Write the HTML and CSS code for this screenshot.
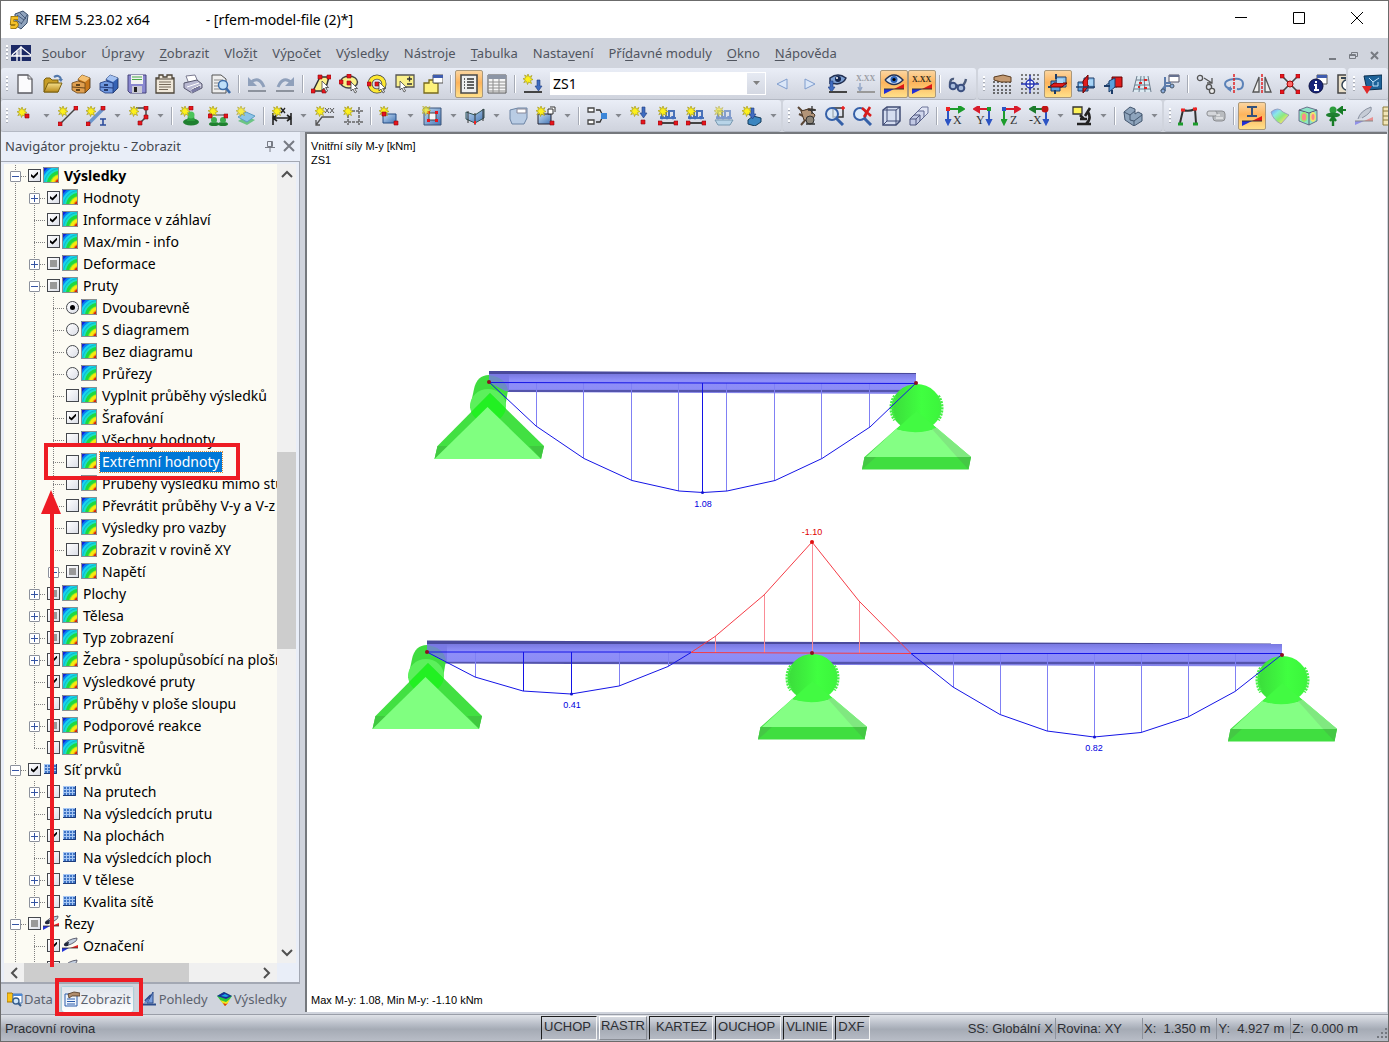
FILE: index.html
```html
<!DOCTYPE html>
<html lang="cs">
<head>
  <meta charset="UTF-8">
  <title>RFEM 5.23.02 x64 - [rfem-model-file (2)*]</title>
  <meta name="viewport" content="width=device-width, initial-scale=1.0">
  <link rel="stylesheet" href="styles.css">
</head>
<body>
  <!-- Icon sprite -->
  <svg class="sprite" aria-hidden="true">
    <defs>
      <linearGradient id="gBlue" x1="0" y1="0" x2="1" y2="1"><stop offset="0" stop-color="#c4dcf5"/><stop offset="1" stop-color="#4576b4"/></linearGradient>
      <linearGradient id="gGold" x1="0" y1="0" x2="0" y2="1"><stop offset="0" stop-color="#f6e08a"/><stop offset="1" stop-color="#b98a1a"/></linearGradient>
      <linearGradient id="gRain" x1="0" y1="0" x2="1" y2="1"><stop offset="0" stop-color="#7a8cff"/><stop offset=".3" stop-color="#8be8e8"/><stop offset=".55" stop-color="#8eea7c"/><stop offset=".8" stop-color="#f5e26c"/><stop offset="1" stop-color="#ff7a6a"/></linearGradient>
      <path id="star" d="M5 0 6.2 3 9 1.5 7.6 4.3 10 5.5 7.4 6.6 8.5 9.5 5.6 8 4.5 10.5 3.6 7.6.8 8.6 2.4 6 0 4.8 2.8 3.8 1.6 1 4.2 2.5z" fill="#fdf01c" stroke="#a89c20" stroke-width=".7"/>
      <path id="nd" d="M0 0h4v4H0z" fill="#e8141c" stroke="#8c0c10" stroke-width=".6"/>
      <path id="cur" d="M0 0v9l2-2 2 4 1.600-1-2-3.500h3z" fill="#fff" stroke="#444" stroke-width=".8"/>
      <path id="load" d="M0 0h3v6h2l-3.500 5L-2 6h2z" fill="#3f6cc0" stroke="#203c80" stroke-width=".6"/>
      <g id="diag"><path d="M0 20v-5l10 0z" fill="#2230d8"/><path d="M10 15 20 10v5z" fill="#e01818"/><path d="M0 15h20" stroke="#333"/></g>
      <g id="frame2"><path d="M2 10h16M4 10V3h4v6M11 9V3h5v6" fill="none" stroke="#4a72b8" stroke-width="2"/><path d="M2 8l2 4 2-4M7 8l2 4 2-4M13 8l2 4 2-4" fill="#3f6cc0"/></g>
    </defs>

    <symbol id="i-app" viewBox="0 0 20 20"><path d="M6 4 14 1l5 4-1 8-6 6-6-4z" fill="#8fa3bd" stroke="#3b4f6c"/><path d="M8 5l7 5M11 3l6 6M6 9l7 5M15 10l3-5M12 14l3-4" stroke="#33476a" stroke-width=".8"/><path d="M9 8H3.500L3 13h4q2 2-1 4H1.500" fill="none" stroke="#8c6a08" stroke-width="4"/><path d="M9 8H3.500L3 13h4q2 2-1 4H1.500" fill="none" stroke="#f5c128" stroke-width="2.400"/></symbol>
    <symbol id="i-bridge" viewBox="0 0 20 16"><path d="M0 0h20v16H0z" fill="#1c2a66"/><path d="M0 11h20M1 10l9-8 10 8M10 1v15M6 6v10" fill="none" stroke="#fff" stroke-width="1.300"/><path d="M10 2v9H3z" fill="#fff" opacity=".6"/></symbol>
    <symbol id="i-new" viewBox="0 0 20 20"><path d="M3 1h10l4 4v14H3z" fill="#fbfbfd" stroke="#5a5a60" stroke-width="1.300"/><path d="M13 1v4h4" fill="#ddd" stroke="#5a5a60"/></symbol>
    <symbol id="i-open" viewBox="0 0 20 20"><path d="M1 18V6l2-2h4l2 2h6v12z" fill="#c79d26" stroke="#7a6010"/><path d="M1 18 5 9h14l-4 9z" fill="url(#gGold)" stroke="#7a6010"/><path d="M11 3q5-3 7 2" fill="none" stroke="#5278ac" stroke-width="2.200"/><path d="M15 5h5l-2 3z" fill="#5278ac"/></symbol>
    <symbol id="i-cab" viewBox="0 0 20 20"><path d="M7 5l4-4 8 3v10l-5 5z" fill="#c9781a" stroke="#4a3010" stroke-width=".8"/><path d="M7 5l4-4 8 3-5 4z" fill="#f5c070"/><path d="M1 9l6-2 7 2v10l-8 0-5-3z" fill="#e0a050" stroke="#6a4618" stroke-width=".8"/><path d="M1 13l13 1" stroke="#6a4618"/><path d="M5 11h4M5 16h4" stroke="#3a2608" stroke-width="1.600"/></symbol>
    <symbol id="i-cabblue" viewBox="0 0 20 20"><path d="M7 5l4-4 8 3v10l-5 5z" fill="#3562b4" stroke="#182c5c" stroke-width=".8"/><path d="M7 5l4-4 8 3-5 4z" fill="#a4c2f2"/><path d="M1 9l6-2 7 2v10l-8 0-5-3z" fill="#6f98e0" stroke="#20387a" stroke-width=".8"/><path d="M1 13l13 1" stroke="#20387a"/><path d="M5 11h4M5 16h4" stroke="#101c44" stroke-width="1.600"/></symbol>
    <symbol id="i-save" viewBox="0 0 20 20"><path d="M1 1h18v18H3l-2-2z" fill="#8a88d0" stroke="#45437a"/><path d="M4 1h12v9H4z" fill="#f2f2f2"/><path d="M5 3h10M5 5.500h10" stroke="#48a848"/><path d="M5 12h10v7H5z" fill="#c9c9d4"/><path d="M7 13h3v5H7z" fill="#222"/></symbol>
    <symbol id="i-report" viewBox="0 0 20 20"><path d="M1 4h3V1h4v2h4V1h5v3h2v15H1z" fill="#f0e8da" stroke="#4c4438" stroke-width="1.300"/><path d="M4 8h12M4 10.500h12M4 13h12M4 15.500h9" stroke="#75695a"/><path d="M1 5h18" stroke="#4c4438"/></symbol>
    <symbol id="i-print" viewBox="0 0 20 20"><path d="M3 2l9-1 3 7-9 2z" fill="#fff" stroke="#7a7a90"/><path d="M1 9l13-3 5 4v4l-10 5-8-5z" fill="#b9b9d2" stroke="#55556c"/><path d="M4 13l12-4M9 19v-4l9-4" stroke="#fff"/><path d="M8 16l9-4v3l-8 4z" fill="#7b7ba4"/></symbol>
    <symbol id="i-preview" viewBox="0 0 20 20"><path d="M1 1h9l5 4v14H1z" fill="#eee" stroke="#555"/><path d="M3 6h9M3 9h9M3 12h9M3 15h8" stroke="#8a8a8a"/><circle cx="12" cy="11" r="4.500" fill="#bfe0fa" stroke="#3c6ca8" stroke-width="1.500"/><path d="M15 14l4 5" stroke="#3c6ca8" stroke-width="2.600"/></symbol>
    <symbol id="i-undo" viewBox="0 0 20 20"><path d="M3 9q9-8 14 4" fill="none" stroke="#8fa0bb" stroke-width="3"/><path d="M1 3v9h9z" fill="#8fa0bb"/><path d="M1 17h18" stroke="#8d939e" stroke-width="2"/></symbol>
    <symbol id="i-redo" viewBox="0 0 20 20"><path d="M17 9Q8 1 3 13" fill="none" stroke="#8fa0bb" stroke-width="3"/><path d="M19 3v9h-9z" fill="#8fa0bb"/><path d="M1 17h18" stroke="#8d939e" stroke-width="2"/></symbol>
    <symbol id="i-selpoly" viewBox="0 0 20 20"><path d="M2 17 9 3h9l-4 14z" fill="#faf08a" stroke="#333" stroke-width="1.500"/><use href="#nd" x="0" y="15"/><use href="#nd" x="7" y="1"/><use href="#nd" x="16" y="1"/><use href="#nd" x="11" y="15"/><use href="#cur" x="11" y="7"/></symbol>
    <symbol id="i-selell" viewBox="0 0 20 20"><ellipse cx="10" cy="8" rx="8.500" ry="6" fill="#faf08a" stroke="#444" stroke-width="1.500"/><use href="#nd" x="8" y="0"/><use href="#nd" x="0" y="6"/><use href="#nd" x="8" y="7"/><use href="#cur" x="12" y="8"/></symbol>
    <symbol id="i-selring" viewBox="0 0 20 20"><circle cx="10" cy="10" r="7" fill="none" stroke="#444" stroke-width="5"/><circle cx="10" cy="10" r="7" fill="none" stroke="#fde832" stroke-width="3.500"/><use href="#nd" x="8" y="8"/><use href="#nd" x="0" y="8"/><use href="#cur" x="12" y="8"/></symbol>
    <symbol id="i-selpm" viewBox="0 0 20 20"><path d="M1 1h18v12H1z" fill="#faf08a" stroke="#555" stroke-width="1.300"/><path d="M12 5h5M14.500 2.500v5M12 10h5" stroke="#333" stroke-width="1.300"/><use href="#cur" x="5" y="7"/></symbol>
    <symbol id="i-note" viewBox="0 0 20 20"><path d="M1 9h5V6h6v3h3v10H1z" fill="#fdf17c" stroke="#77691c" stroke-width="1.300"/><path d="M10 1h10v8H10z" fill="#fff" stroke="#555"/><path d="M10 1h10v3H10z" fill="#3f5cae"/></symbol>
    <symbol id="i-list" viewBox="0 0 20 20"><path d="M2 1h16v18H2z" fill="#eee" stroke="#4a4a4a" stroke-width="1.600"/><path d="M5 5h1M5 8h1M5 11h1M5 14h1M8 5h7M8 8h7M8 11h7M8 14h7" stroke="#333" stroke-width="1.400"/></symbol>
    <symbol id="i-table" viewBox="0 0 20 20"><path d="M1 1h18v18H1z" fill="#f6f6f6" stroke="#555"/><path d="M1 1h18v4H1z" fill="#8c95a5"/><path d="M1 8h18M1 11h18M1 14h18M1 17h18M6 5v14M12 5v14" stroke="#8e8e8e"/></symbol>
    <symbol id="i-lcnew" viewBox="0 0 20 20"><use href="#star"/><use href="#load" x="14" y="6"/><path d="M1 18h18" stroke="#444" stroke-width="2"/></symbol>
    <symbol id="i-prev" viewBox="0 0 20 20"><path d="M15 5v10L5 10z" fill="#dbe7f8" stroke="#7f9dce"/></symbol>
    <symbol id="i-next" viewBox="0 0 20 20"><path d="M5 5v10l10-5z" fill="#dbe7f8" stroke="#7f9dce"/></symbol>
    <symbol id="i-eyeload" viewBox="0 0 20 20"><path d="M2 10V4Q10-2 18 4q-2 5-9 6-3-1-7 0" fill="#7c9fd2" stroke="#223052" stroke-width="1.500"/><circle cx="10" cy="5" r="3" fill="#14264f"/><circle cx="9" cy="4" r="1" fill="#fff"/><use href="#load" x="2" y="7"/><path d="M1 18h18" stroke="#444" stroke-width="2"/></symbol>
    <symbol id="i-xxx" viewBox="0 0 20 20"><path d="M4 9v7M2 13l2 4 2-4" fill="none" stroke="#95a8c8" stroke-width="1.500"/><path d="M1 18h18" stroke="#999" stroke-width="2"/></symbol>
    <symbol id="i-eyediag" viewBox="0 0 20 20"><use href="#diag"/><path d="M1 6q9-10 18 0-9 9-18 0" fill="#cfe2fa" stroke="#253354" stroke-width="1.400"/><circle cx="10" cy="5.500" r="3.500" fill="#2c62b8"/><circle cx="10" cy="5.500" r="1.600" fill="#000"/></symbol>
    <symbol id="i-xdiag" viewBox="0 0 20 20"><use href="#diag"/></symbol>
    <symbol id="i-glasses" viewBox="0 0 20 20"><path d="M2 11q0-7 4-6M12 13q5-2 6-8" fill="none" stroke="#4c5c7c" stroke-width="2.400"/><path d="M8 11l3 1" stroke="#3c5080" stroke-width="2"/><circle cx="5" cy="12" r="3.300" fill="#a8bcdc" stroke="#3c5080" stroke-width="2"/><circle cx="13" cy="14" r="3.300" fill="#a8bcdc" stroke="#3c5080" stroke-width="2"/></symbol>
    <symbol id="i-handgrid" viewBox="0 0 20 20"><path d="M1 8h19M1 12h19M1 16h19M1 19h19" stroke="#444" stroke-width="1.500" stroke-dasharray="2 2"/><path d="M2 3l9-2 8 2v5H9L2 6z" fill="#c49a72" stroke="#5a3c20"/></symbol>
    <symbol id="i-snap" viewBox="0 0 20 20"><path d="M1 1h19M1 5h19M1 15h19M1 19h19M1 9h4M16 9h4" stroke="#555" stroke-width="1.500" stroke-dasharray="2 2"/><circle cx="10" cy="10" r="4" fill="#fff" stroke="#2434b4" stroke-width="1.500"/><path d="M10 1v18M1 10h18" stroke="#2434b4" stroke-width="1.300"/></symbol>
    <symbol id="i-plane1" viewBox="0 0 20 20"><path d="M8 3h10v10H8z" fill="#8fc3ee" stroke="#1c3c68"/><path d="M3 7h9v10H3z" fill="#5aa0dd" stroke="#1c3c68"/><path d="M1 13l5-4h13l-5 4z" fill="#e01c1c" stroke="#600"/><path d="M9 5h6v4H9z" fill="#a8d4f6"/><path d="M8 0v5M7 16v4M0 13h3" stroke="#1c3c68" stroke-width="2"/></symbol>
    <symbol id="i-plane2" viewBox="0 0 20 20"><path d="M8 4h10v10H8z" fill="#8fc3ee" stroke="#1c3c68"/><path d="M2 8h10v9H2z" fill="#5aa0dd" stroke="#1c3c68"/><path d="M7 7l5-6v12l-5 6z" fill="#e01c1c" stroke="#600"/><path d="M12 6h5v5h-5zM3 10h4v4H3z" fill="#a8d4f6"/><path d="M0 13h19" stroke="#1c3c68" stroke-width="1.500"/></symbol>
    <symbol id="i-plane3" viewBox="0 0 20 20"><path d="M1 12l5-4h12l-5 5z" fill="#8fc3ee" stroke="#1c3c68"/><path d="M8 3h10v10H8z" fill="#e01c1c" stroke="#600"/><path d="M5 7l6-3v9l-6 5z" fill="#5aa0dd" stroke="#1c3c68"/><path d="M0 12h6M8 16v4" stroke="#1c3c68" stroke-width="2"/></symbol>
    <symbol id="i-gridsurf" viewBox="0 0 20 20"><path d="M5 2h11l3 16H1z" fill="#dceaf2"/><path d="M5 2 1 18M9 2 7 18M12 2l1 16M16 2l3 16M4 6h13M3 11h15M2 15h17" stroke="#6c7c8c" fill="none"/><path d="M7 9h3M12 6h3M6 13h2M12 14h3" stroke="#d22" stroke-width="2"/></symbol>
    <symbol id="i-levels" viewBox="0 0 20 20"><path d="M9 1h10v7H9z" fill="#fff" stroke="#556"/><path d="M9 1h10v2H9z" fill="#66718f"/><path d="M5 3v14M1 17l4-5h6M5 9h6" fill="none" stroke="#5c7cac" stroke-width="2"/><circle cx="12" cy="12" r="2" fill="#8bacdc" stroke="#456"/><circle cx="3" cy="17" r="2" fill="#8bacdc" stroke="#456"/></symbol>
    <symbol id="i-copy" viewBox="0 0 20 20"><circle cx="4" cy="4" r="2.600" fill="none" stroke="#555" stroke-width="1.300"/><path d="M8 4l8 5M16 4v5h-5" fill="none" stroke="#555" stroke-width="1.300"/><circle cx="13" cy="13" r="2.600" fill="none" stroke="#555" stroke-width="1.300"/><circle cx="16" cy="17" r="2.600" fill="#eee" stroke="#555" stroke-width="1.300"/></symbol>
    <symbol id="i-rotate" viewBox="0 0 20 20"><path d="M8 15Q1 14 1 10t9-5 9 5-6 5" fill="none" stroke="#5b82b8" stroke-width="2"/><path d="M7 12v6l-4-3z" fill="#5b82b8"/><path d="M10 0v20" stroke="#e02020" stroke-width="1.500" stroke-dasharray="3 1"/></symbol>
    <symbol id="i-mirror" viewBox="0 0 20 20"><path d="M7 3v15H1zM13 3v15h6z" fill="#eee" stroke="#555" stroke-width="1.300"/><path d="M10 0v20" stroke="#e02020" stroke-width="1.500" stroke-dasharray="3 1"/></symbol>
    <symbol id="i-cross" viewBox="0 0 20 20"><path d="M2 2l16 16M18 2 2 18" stroke="#444" stroke-width="1.600"/><use href="#nd"/><use href="#nd" x="16"/><use href="#nd" y="16"/><use href="#nd" x="16" y="16"/><circle cx="10" cy="10" r="3" fill="#f66" stroke="#a00"/></symbol>
    <symbol id="i-info" viewBox="0 0 20 20"><path d="M9 1h10v9H9z" fill="#fff" stroke="#555"/><path d="M9 1h10v3H9z" fill="#3f5cae"/><circle cx="8" cy="12" r="7" fill="#17247a" stroke="#0a1040"/><path d="M8 7v2M6 11h2v5M6 16h5" stroke="#fff" stroke-width="2" fill="none"/></symbol>
    <symbol id="i-gauge" viewBox="0 0 20 20"><path d="M2 1h16v18H2z" fill="#e9dfc9" stroke="#444" stroke-width="1.500"/><circle cx="11" cy="11" r="5" fill="#fff" stroke="#345" stroke-width="1.500"/><path d="M5 4h8" stroke="#345" stroke-width="2"/></symbol>
    <symbol id="i-screen" viewBox="0 0 20 20"><path d="M2 2l18-1v14l-15 1z" fill="#1d6298" stroke="#0e2f4e"/><path d="M7 4l4 4 6-4M11 8v4h5V8" fill="none" stroke="#bfe4ff"/><path d="M0 12h10l-5 8z" fill="#e02828"/></symbol>
    <symbol id="i-rtable" viewBox="0 0 20 20"><path d="M1 1h18v18H1z" fill="#f2e6b8" stroke="#8c7c3c"/><path d="M1 5h18M1 10h18M1 14h18M7 1v18" stroke="#8c7c3c"/></symbol>

    <symbol id="i-node" viewBox="0 0 20 20"><use href="#star" x="2" y="1"/><use href="#nd" x="10" y="8"/></symbol>
    <symbol id="i-line" viewBox="0 0 20 20"><path d="M2 18 18 2" stroke="#444" stroke-width="1.500"/><use href="#star"/><use href="#nd" y="16"/><use href="#nd" x="16"/></symbol>
    <symbol id="i-member" viewBox="0 0 20 20"><path d="M2 18 18 2" stroke="#6d96cc" stroke-width="3.500"/><use href="#star"/><use href="#nd" y="16"/><use href="#nd" x="15"/><path d="M14 13h6M14 19h6M17 13v6" stroke="#2c4c9c" stroke-width="1.600"/></symbol>
    <symbol id="i-pline" viewBox="0 0 20 20"><path d="M7 2h10v9l-6 6" fill="none" stroke="#444" stroke-width="1.500"/><use href="#star"/><use href="#nd" x="15"/><use href="#nd" x="15" y="9"/><use href="#nd" x="9" y="15"/></symbol>
    <symbol id="i-nsup" viewBox="0 0 20 20"><ellipse cx="11" cy="16" rx="8" ry="3.500" fill="#1f8030"/><path d="M8 10h6l1 5H7z" fill="#2c9c3c"/><circle cx="11" cy="9" r="3.500" fill="#4cc45c"/><use href="#star"/><use href="#nd" x="9" y="0"/></symbol>
    <symbol id="i-lsup" viewBox="0 0 20 20"><path d="M1 9h18" stroke="#444"/><ellipse cx="6" cy="18" rx="5" ry="2" fill="#1f8030"/><ellipse cx="15" cy="18" rx="5" ry="2" fill="#1f8030"/><circle cx="6" cy="14" r="3" fill="#3cac4c"/><circle cx="15" cy="14" r="3" fill="#3cac4c"/><use href="#star"/><use href="#nd" y="8"/><use href="#nd" x="16" y="8"/></symbol>
    <symbol id="i-ssup" viewBox="0 0 20 20"><path d="M2 15l8-5 9 4-8 5z" fill="#6cc484"/><path d="M2 11l8-5 9 4-8 6z" fill="#8cc4e8" stroke="#5c9cc4"/><use href="#star" opacity=".8"/></symbol>
    <symbol id="i-dim" viewBox="0 0 20 20"><path d="M1 7v12M19 7v12M2 12h16M5 9l-4 3 4 3M15 9l4 3-4 3" fill="none" stroke="#222" stroke-width="1.600"/><use href="#star"/><path d="M9 2l4 5M13 2 9 7" stroke="#222" stroke-width="1.300"/></symbol>
    <symbol id="i-comment" viewBox="0 0 20 20"><path d="M1 19l6-8h12M1 14v5h4" fill="none" stroke="#555" stroke-width="1.300"/><use href="#star"/><path d="M10 2l4 5M14 2l-4 5M15 2l4 5M19 2l-4 5" stroke="#555"/></symbol>
    <symbol id="i-guides" viewBox="0 0 20 20"><path d="M5 1v18M16 1v18M1 5h19M1 16h19" stroke="#666" stroke-width="1.500" stroke-dasharray="3 1"/><use href="#star"/></symbol>
    <symbol id="i-surf" viewBox="0 0 20 20"><path d="M4 8h13v9H4z" fill="url(#gBlue)" stroke="#244c84"/><use href="#star"/><use href="#nd" x="3" y="6"/><use href="#nd" x="15" y="15"/></symbol>
    <symbol id="i-opening" viewBox="0 0 20 20"><path d="M2 2h17v17H2z" fill="url(#gBlue)" stroke="#3c5478"/><path d="M7 7h7v7H7z" fill="#f4f6fa" stroke="#444"/><path d="M5 5h3v3H5zM13 5h3v3h-3zM5 13h3v3H5zM13 13h3v3h-3z" fill="#e8141c"/><use href="#star" x="-1" y="-1" opacity=".7"/></symbol>
    <symbol id="i-fold" viewBox="0 0 20 20"><path d="M1 6l9 3 9-6v9l-9 5-9-4z" fill="url(#gBlue)" stroke="#355"/><path d="M3 5v12M10 7v12M18 3v12" stroke="#333"/><path d="M10 15v3" stroke="#e22" stroke-width="2"/></symbol>
    <symbol id="i-solid" viewBox="0 0 20 20"><path d="M2 4l8-2h9v10l-3 6H4l-2-5z" fill="#b9cce4" stroke="#6c84a4"/><path d="M9 3h9v4H9z" fill="#fff" stroke="#889"/></symbol>
    <symbol id="i-surf3" viewBox="0 0 20 20"><path d="M2 8h13v10H2z" fill="url(#gBlue)" stroke="#223"/><path d="M12 3h5v5h-5zM14 1h5v5" fill="#fff" stroke="#333"/><use href="#star"/><use href="#nd" x="14" y="15"/></symbol>
    <symbol id="i-combo" viewBox="0 0 20 20"><path d="M1 2h6v4H1zM1 14h6v4H1z" fill="#fff" stroke="#444" stroke-width="1.300"/><path d="M9 4h4l2 4M9 16h4l2-4" fill="none" stroke="#333" stroke-width="1.300"/><path d="M14 7h6v6h-6z" fill="#3c86d8"/></symbol>
    <symbol id="i-nload" viewBox="0 0 20 20"><use href="#star"/><use href="#load" x="12" y="1"/><use href="#nd" x="11" y="14"/></symbol>
    <symbol id="i-mload" viewBox="0 0 20 20"><use href="#frame2" y="2"/><path d="M1 17h18" stroke="#444" stroke-width="2"/><use href="#star"/><use href="#nd" y="15"/><use href="#nd" x="16" y="15"/></symbol>
    <symbol id="i-sload" viewBox="0 0 20 20"><path d="M1 14h18l-3 5H4z" fill="#b8d4e8" stroke="#7898b0"/><use href="#frame2" y="2" opacity=".6"/><use href="#star" opacity=".6"/></symbol>
    <symbol id="i-vload" viewBox="0 0 20 20"><path d="M6 14l5-4 8 2v4l-6 4-7-2z" fill="#3c86c0" stroke="#143c5c"/><use href="#star"/><use href="#load" x="9" y="2"/></symbol>
    <symbol id="i-snaphand" viewBox="0 0 20 20"><path d="M1 1l5 5 6-3 6 1M2 8l8 4M4 19l6-7" stroke="#5c4838" stroke-width="2" fill="none"/><path d="M4 5l8-2 6 6-3 6-8-1z" fill="#b29478" stroke="#4a3828"/><circle cx="13" cy="14" r="4" fill="#8c8478" stroke="#333"/><path d="M15 0v8M11 4h8M9 18h9" stroke="#333" stroke-width="1.300"/></symbol>
    <symbol id="i-zoomwin" viewBox="0 0 20 20"><path d="M8 2h10v9H8z" fill="none" stroke="#333" stroke-width="1.500"/><path d="M18 0v4M16 2h4" stroke="#e22" stroke-width="1.500"/><circle cx="7" cy="8" r="6" fill="#dcebfa" fill-opacity=".7" stroke="#3560a8" stroke-width="2"/><path d="M11 12l7 7" stroke="#3560a8" stroke-width="3"/></symbol>
    <symbol id="i-zoomx" viewBox="0 0 20 20"><circle cx="7" cy="8" r="6" fill="#dcebfa" stroke="#3560a8" stroke-width="2"/><path d="M11 12l7 7" stroke="#3560a8" stroke-width="3"/><path d="M9 2l9 8M17 1l-6 10" stroke="#d81c1c" stroke-width="2.600"/></symbol>
    <symbol id="i-cube" viewBox="0 0 20 20"><path d="M2 4l4-3h13v14l-4 4H2z" fill="#d5ddf0" stroke="#404c74" stroke-width="1.500"/><path d="M2 4h13v15M15 4l4-3M6 1v14h13M6 15l-4 4" fill="none" stroke="#404c74"/></symbol>
    <symbol id="i-cubes" viewBox="0 0 20 20"><path d="M9 5l4-4h6v6l-4 4H9z" fill="#e0e4f4" stroke="#6c7499"/><path d="M5 9l4-4h6v6l-4 4H5z" fill="#d0d6ec" stroke="#5c648c"/><path d="M1 13l4-4h6v6l-4 4H1z" fill="#c2c9e4" stroke="#4c547c"/><path d="M1 13h6v6M7 13l4-4" fill="none" stroke="#4c547c"/></symbol>
    <symbol id="i-x" viewBox="0 0 20 20"><path d="M4 3h14M14 0l5 3-5 3z" stroke="#1c9c2c" stroke-width="2" fill="#1c9c2c"/><path d="M3 3v14M1 14l2 4 2-4z" stroke="#2c54c4" stroke-width="2" fill="#2c54c4"/><path d="M1 1h4v4H1z" fill="#e22"/></symbol>
    <symbol id="i-y" viewBox="0 0 20 20"><path d="M16 3H3M6 0 1 3l5 3z" stroke="#d81c2c" stroke-width="2" fill="#d81c2c"/><path d="M16 3v14M14 14l2 4 2-4z" stroke="#2c54c4" stroke-width="2" fill="#2c54c4"/><path d="M14 1h4v4h-4z" fill="#1c9c2c"/></symbol>
    <symbol id="i-z" viewBox="0 0 20 20"><path d="M4 3h14M14 0l5 3-5 3z" stroke="#d81c2c" stroke-width="2" fill="#d81c2c"/><path d="M3 3v14M1 14l2 4 2-4z" stroke="#1c9c2c" stroke-width="2" fill="#1c9c2c"/><path d="M1 1h4v4H1z" fill="#2c54c4"/></symbol>
    <symbol id="i-mx" viewBox="0 0 20 20"><path d="M16 3H3M6 0 1 3l5 3z" stroke="#1c7c2c" stroke-width="2" fill="#1c7c2c"/><path d="M17 3v14M15 14l2 4 2-4z" stroke="#2c54c4" stroke-width="2" fill="#2c54c4"/><circle cx="16" cy="3" r="3.500" fill="#c01414"/></symbol>
    <symbol id="i-micro" viewBox="0 0 20 20"><path d="M1 1h9v7H1z" fill="#fdf258" stroke="#333" stroke-width="1.300"/><path d="M18 2l-5 8M8 9l4 4M16 6q4 7-2 12M5 18h14M8 13h7" stroke="#222" stroke-width="2.600" fill="none"/></symbol>
    <symbol id="i-block" viewBox="0 0 20 20"><path d="M1 6l6-5 5 2v5l3-2 4 2v7l-8 5-9-6z" fill="#8ea4bc" stroke="#43566e"/><path d="M1 6l6 3v5l4 1v5M7 9l5-4M11 15l8-6" fill="none" stroke="#43566e"/></symbol>
    <symbol id="i-frame" viewBox="0 0 20 20"><path d="M2 17 5 4q6 2 12-1l1 14" fill="none" stroke="#333" stroke-width="2"/><path d="M3 4h4M15 3h4" stroke="#e22" stroke-width="3"/><path d="M0 18h5M15 18h5" stroke="#1c9c2c" stroke-width="3"/></symbol>
    <symbol id="i-roll" viewBox="0 0 20 20"><rect x="7" y="5" width="12" height="10" rx="3" fill="#b9bcc0" stroke="#8a8c90"/><rect x="1" y="5" width="10" height="5" rx="2" fill="#d4d6da" stroke="#8a8c90"/><path d="M10 12h7M10 9h4" stroke="#fff"/></symbol>
    <symbol id="i-idiag" viewBox="0 0 20 20"><use href="#diag"/><path d="M5 1h10M5 10h10M10 1v9" stroke="#34527c" stroke-width="2"/></symbol>
    <symbol id="i-rsurf" viewBox="0 0 20 20"><path d="M1 6q7-6 12 0l6 3-8 9q-8-4-10-12" fill="url(#gRain)" stroke="#9098b8" stroke-width=".8"/></symbol>
    <symbol id="i-rsolid" viewBox="0 0 20 20"><path d="M1 4l8-3 10 3v11l-8 4-10-4z" fill="#8ee4c8" stroke="#557" stroke-width=".8"/><path d="M1 4l10 3 8-3M11 7v12" fill="none" stroke="#557"/><ellipse cx="6" cy="11" rx="3.500" ry="5" fill="#9eea6c"/><ellipse cx="6" cy="11" rx="2" ry="3.500" fill="#f88"/><ellipse cx="15" cy="11" rx="3" ry="5" fill="#f0e46c"/><ellipse cx="15" cy="11" rx="1.500" ry="3" fill="#f88"/></symbol>
    <symbol id="i-react" viewBox="0 0 20 20"><circle cx="7" cy="4" r="3.500" fill="#2c9c3c"/><ellipse cx="7" cy="9" rx="7" ry="2.500" fill="#1f8030"/><path d="M7 12v8M4 15l3-4 3 4" fill="none" stroke="#167c26" stroke-width="2.400"/><path d="M13 4h7M16 1l-4 3 4 3z" fill="#167c26" stroke="#167c26" stroke-width="2"/></symbol>
    <symbol id="i-section" viewBox="0 0 20 20"><path d="M4 13q2-8 13-12 2 5-9 11" fill="#c6ccd6" stroke="#8890a0"/><path d="M1 19v-4l9 0z" fill="#9090e8"/><path d="M10 15l9-4v4z" fill="#e89090"/><path d="M1 15h18" stroke="#888"/></symbol>

    <clipPath id="cRes"><path d="M0 0h16v16H0z"/></clipPath>
    <symbol id="t-res" viewBox="0 0 16 16"><path d="M0 0h16v16H0z" fill="#1424d8"/><g clip-path="url(#cRes)"><circle cx="17" cy="17" r="20" fill="#0a7cf0"/><circle cx="17" cy="17" r="18" fill="#18d4f0"/><circle cx="17" cy="17" r="16" fill="#10b4d0"/><circle cx="17" cy="17" r="15" fill="#18e0c8"/><circle cx="17" cy="17" r="13" fill="#20d840"/><circle cx="17" cy="17" r="10" fill="#90ec20"/><circle cx="17" cy="17" r="9" fill="#f8e810"/><circle cx="17" cy="17" r="6" fill="#f0a010"/><circle cx="17" cy="17" r="5" fill="#d82010"/></g><path d="M.5.5h15v15H.5z" fill="none" stroke="#8c9090"/></symbol>
    <symbol id="t-mesh" viewBox="0 0 16 16"><path d="M1 3h13v10H1z" fill="#3f74c4"/><path d="M1 3.500h13M1 6.500h13M1 9.500h13M1.500 3v10M4.500 3v10M7.500 3v10M10.500 3v10" stroke="#a8c8f4"/><path d="M1 12.500h12.500V3" fill="none" stroke="#1c3c7c"/></symbol>
    <symbol id="t-cut" viewBox="0 0 16 16"><path d="M2 8q4-6 13-7 1 4-11 8z" fill="#c2cede" stroke="#445" stroke-width=".8"/><path d="M2 8q0-3 5-3l-1 4H3z" fill="#222a3c"/><path d="M0 11v4l7-4z" fill="#2434d8"/><path d="M8 11l8-3v3z" fill="#e02020"/><path d="M0 11h16" stroke="#333" stroke-width=".8"/></symbol>
    <symbol id="t-data" viewBox="0 0 16 16"><path d="M0 2h5l1 1v8H0z" fill="#fcc418" stroke="#a87808"/><path d="M6 3h9v9H6z" fill="#fff" stroke="#4474b4"/><path d="M6 3h9v2H6z" fill="#4c88d4"/><circle cx="9" cy="10" r="3" fill="#cfe6fa" stroke="#345c8c" stroke-width="1.300"/><path d="M11 12l3 3" stroke="#345c8c" stroke-width="2"/></symbol>
    <symbol id="t-show" viewBox="0 0 16 16"><path d="M1 3h12v12H1z" fill="#eef4fc" stroke="#2c5cac"/><path d="M3 8h8M3 10.500h8M3 13h8" stroke="#2c5cac"/><path d="M4 3l6-2 6 1v3H8L5 7z" fill="#b08c6c" stroke="#4c3420" stroke-width=".8"/></symbol>
    <symbol id="t-views" viewBox="0 0 16 16"><path d="M11 1v11H5z" fill="#7ca0dc" stroke="#2c4c8c"/><path d="M1 13.500h13M3 10l6-6" stroke="#2c4c8c" stroke-width="2"/><path d="M2 12l3-4 3 3z" fill="#5c80c4"/></symbol>
    <symbol id="t-rain" viewBox="0 0 16 16"><path d="M0 5l7-4 8 4-7 10z" fill="#2cc83c"/><path d="M0 5l7-4 8 4-6 3z" fill="#1c2c9c"/><path d="M4 5l4-2 4 2-3 1z" fill="#18a8e0"/><path d="M3 9l6 2 4-3-2 4-3 3z" fill="#f4e41c"/><path d="M6 12l3 1 2-1-3 3z" fill="#e42c18"/></symbol>
  </svg>

  <div class="window">
    <header class="titlebar">
      <svg class="icon"><use href="#i-app"/></svg>
      <span class="app-name">RFEM 5.23.02 x64</span>
      <span class="file-name">- [rfem-model-file (2)*]</span>
      <div class="window-buttons">
        <button aria-label="Minimalizovat"><svg width="14" height="14"><path d="M1 6.500h12"/></svg></button>
        <button aria-label="Maximalizovat"><svg width="14" height="14"><path d="M1.500 1.500h11v11h-11z"/></svg></button>
        <button aria-label="Zavřít"><svg width="14" height="14"><path d="M1 1l12 12M13 1 1 13"/></svg></button>
      </div>
    </header>

    <nav class="menubar">
      <i class="grip"></i>
      <svg class="menu-logo"><use href="#i-bridge"/></svg>
      <button><u>S</u>oubor</button>
      <button>Úpr<u>a</u>vy</button>
      <button><u>Z</u>obrazit</button>
      <button>Vlož<u>i</u>t</button>
      <button>Vý<u>p</u>očet</button>
      <button>Výsled<u>k</u>y</button>
      <button>Nástro<u>j</u>e</button>
      <button><u>T</u>abulka</button>
      <button>Nasta<u>v</u>ení</button>
      <button>Pří<u>d</u>avné moduly</button>
      <button><u>O</u>kno</button>
      <button><u>N</u>ápověda</button>
      <div class="mdi-buttons">
        <button aria-label="Minimalizovat okno"><svg width="9" height="9"><path d="M1 8h7" stroke-width="2"/></svg></button>
        <button aria-label="Obnovit okno"><svg width="9" height="9"><path d="M2.500 3V1.500h6v4H7M.5 3.500h6v4h-6zM.5 4.500h6"/></svg></button>
        <button aria-label="Zavřít okno"><svg width="9" height="9"><path d="M1 1l7 7M8 1 1 8" stroke-width="2"/></svg></button>
      </div>
    </nav>

    <div class="toolbars">
      <div class="band band-main">
        <i class="grip"></i>
        <button class="tool" aria-label="Nový"><svg class="icon"><use href="#i-new"/></svg></button>
        <button class="tool" aria-label="Otevřít"><svg class="icon"><use href="#i-open"/></svg></button>
        <button class="tool" aria-label="Projekty"><svg class="icon"><use href="#i-cab"/></svg></button>
        <button class="tool" aria-label="Bloky"><svg class="icon"><use href="#i-cabblue"/></svg></button>
        <button class="tool" aria-label="Uložit"><svg class="icon"><use href="#i-save"/></svg></button>
        <button class="tool" aria-label="Protokol"><svg class="icon"><use href="#i-report"/></svg></button>
        <button class="tool" aria-label="Tisk"><svg class="icon"><use href="#i-print"/></svg></button>
        <button class="tool" aria-label="Náhled"><svg class="icon"><use href="#i-preview"/></svg></button>
        <i class="sep"></i>
        <button class="tool" aria-label="Zpět"><svg class="icon"><use href="#i-undo"/></svg></button>
        <button class="tool" aria-label="Znovu"><svg class="icon"><use href="#i-redo"/></svg></button>
        <i class="sep"></i>
        <button class="tool" aria-label="Výběr polygonem"><svg class="icon"><use href="#i-selpoly"/></svg></button>
        <button class="tool" aria-label="Výběr elipsou"><svg class="icon"><use href="#i-selell"/></svg></button>
        <button class="tool" aria-label="Výběr prstencem"><svg class="icon"><use href="#i-selring"/></svg></button>
        <button class="tool" aria-label="Přidat k výběru"><svg class="icon"><use href="#i-selpm"/></svg></button>
        <button class="tool" aria-label="Zvláštní výběr"><svg class="icon"><use href="#i-note"/></svg></button>
        <i class="sep"></i>
        <button class="tool active" aria-label="Navigátor"><svg class="icon"><use href="#i-list"/></svg></button>
        <button class="tool" aria-label="Tabulky"><svg class="icon"><use href="#i-table"/></svg></button>
        <i class="sep"></i>
        <button class="tool" aria-label="Nový zatěžovací stav"><svg class="icon"><use href="#i-lcnew"/></svg></button>
        <select class="loadcase" aria-label="Zatěžovací stav"><option>ZS1</option></select>
        <button class="tool" aria-label="Předchozí"><svg class="icon"><use href="#i-prev"/></svg></button>
        <button class="tool" aria-label="Další"><svg class="icon"><use href="#i-next"/></svg></button>
        <button class="tool" aria-label="Zobrazit zatížení"><svg class="icon"><use href="#i-eyeload"/></svg></button>
        <button class="tool" aria-label="Hodnoty zatížení"><svg class="icon"><use href="#i-xxx"/><text class="xt dim" x="0" y="7">X.XX</text></svg></button>
        <button class="tool active" aria-label="Zobrazit výsledky"><svg class="icon"><use href="#i-eyediag"/></svg></button>
        <button class="tool active" aria-label="Hodnoty výsledků"><svg class="icon"><use href="#i-xdiag"/><text class="xt" x="0" y="8">X.XX</text></svg></button>
        <i class="sep"></i>
        <button class="tool" aria-label="Panel"><svg class="icon"><use href="#i-glasses"/></svg></button>
      </div>
      <div class="band band-edit">
        <i class="grip"></i>
        <button class="tool" aria-label="Pracovní rovina"><svg class="icon"><use href="#i-handgrid"/></svg></button>
        <button class="tool" aria-label="Rastr"><svg class="icon"><use href="#i-snap"/></svg></button>
        <button class="tool active" aria-label="Rovina XY"><svg class="icon"><use href="#i-plane1"/></svg></button>
        <button class="tool" aria-label="Rovina YZ"><svg class="icon"><use href="#i-plane2"/></svg></button>
        <button class="tool" aria-label="Rovina XZ"><svg class="icon"><use href="#i-plane3"/></svg></button>
        <button class="tool" aria-label="Síť konečných prvků"><svg class="icon"><use href="#i-gridsurf"/></svg></button>
        <button class="tool" aria-label="Souřadný systém"><svg class="icon"><use href="#i-levels"/></svg></button>
        <i class="sep"></i>
        <button class="tool" aria-label="Kopírovat"><svg class="icon"><use href="#i-copy"/></svg></button>
        <button class="tool" aria-label="Otočit"><svg class="icon"><use href="#i-rotate"/></svg></button>
        <button class="tool" aria-label="Zrcadlit"><svg class="icon"><use href="#i-mirror"/></svg></button>
        <button class="tool" aria-label="Rozdělit"><svg class="icon"><use href="#i-cross"/></svg></button>
        <button class="tool" aria-label="Informace"><svg class="icon"><use href="#i-info"/></svg></button>
        <button class="tool" aria-label="Měření"><svg class="icon"><use href="#i-gauge"/></svg></button>
      </div>
      <div class="band band-last">
        <i class="grip"></i>
        <button class="tool" aria-label="Moduly"><svg class="icon"><use href="#i-screen"/></svg></button>
      </div>
    </div>

    <div class="toolbars">
      <div class="band">
        <i class="grip"></i>
        <button class="tool" aria-label="Uzel"><svg class="icon"><use href="#i-node"/></svg></button><button class="drop" aria-label="Možnosti uzlu"></button>
        <button class="tool" aria-label="Linie"><svg class="icon"><use href="#i-line"/></svg></button>
        <button class="tool" aria-label="Prut"><svg class="icon"><use href="#i-member"/></svg></button><button class="drop" aria-label="Možnosti prutu"></button>
        <button class="tool" aria-label="Polylinie"><svg class="icon"><use href="#i-pline"/></svg></button><button class="drop" aria-label="Možnosti polylinie"></button>
        <i class="sep"></i>
        <button class="tool" aria-label="Uzlová podpora"><svg class="icon"><use href="#i-nsup"/></svg></button>
        <button class="tool" aria-label="Liniová podpora"><svg class="icon"><use href="#i-lsup"/></svg></button>
        <button class="tool" aria-label="Plošná podpora"><svg class="icon"><use href="#i-ssup"/></svg></button>
        <i class="sep"></i>
        <button class="tool" aria-label="Kóta"><svg class="icon"><use href="#i-dim"/></svg></button><button class="drop" aria-label="Možnosti kóty"></button>
        <button class="tool" aria-label="Komentář"><svg class="icon"><use href="#i-comment"/></svg></button>
        <button class="tool" aria-label="Vodicí linie"><svg class="icon"><use href="#i-guides"/></svg></button>
        <i class="sep"></i>
        <button class="tool" aria-label="Plocha"><svg class="icon"><use href="#i-surf"/></svg></button><button class="drop" aria-label="Možnosti plochy"></button>
        <button class="tool" aria-label="Otvor"><svg class="icon"><use href="#i-opening"/></svg></button><button class="drop" aria-label="Možnosti otvoru"></button>
        <button class="tool" aria-label="Skořepina"><svg class="icon"><use href="#i-fold"/></svg></button><button class="drop" aria-label="Možnosti skořepiny"></button>
        <button class="tool" aria-label="Těleso"><svg class="icon"><use href="#i-solid"/></svg></button>
        <button class="tool" aria-label="Těleso z ploch"><svg class="icon"><use href="#i-surf3"/></svg></button><button class="drop" aria-label="Možnosti tělesa"></button>
        <i class="sep"></i>
        <button class="tool" aria-label="Kombinace"><svg class="icon"><use href="#i-combo"/></svg></button><button class="drop" aria-label="Možnosti kombinací"></button>
        <button class="tool" aria-label="Zatížení na uzel"><svg class="icon"><use href="#i-nload"/></svg></button>
        <button class="tool" aria-label="Zatížení na prut"><svg class="icon"><use href="#i-mload"/></svg></button>
        <button class="tool" aria-label="Zatížení na linii"><svg class="icon"><use href="#i-mload"/></svg></button>
        <button class="tool" aria-label="Zatížení na plochu"><svg class="icon"><use href="#i-sload"/></svg></button>
        <button class="tool" aria-label="Zatížení na těleso"><svg class="icon"><use href="#i-vload"/></svg></button><button class="drop" aria-label="Možnosti zatížení"></button>
      </div>
      <div class="band">
        <i class="grip"></i>
        <button class="tool" aria-label="Posun"><svg class="icon"><use href="#i-snaphand"/></svg></button>
        <button class="tool" aria-label="Zvětšit oknem"><svg class="icon"><use href="#i-zoomwin"/></svg></button>
        <button class="tool" aria-label="Zobrazit vše"><svg class="icon"><use href="#i-zoomx"/></svg></button>
        <button class="tool" aria-label="Izometrie"><svg class="icon"><use href="#i-cube"/></svg></button>
        <button class="tool" aria-label="Perspektiva"><svg class="icon"><use href="#i-cubes"/></svg></button>
        <i class="sep"></i>
        <button class="tool" aria-label="Pohled X"><svg class="icon"><use href="#i-x"/><text class="ax" x="8" y="18">X</text></svg></button>
        <button class="tool" aria-label="Pohled Y"><svg class="icon"><use href="#i-y"/><text class="ax" x="3" y="18">Y</text></svg></button>
        <button class="tool" aria-label="Pohled Z"><svg class="icon"><use href="#i-z"/><text class="ax" x="9" y="18">Z</text></svg></button>
        <button class="tool" aria-label="Pohled -X"><svg class="icon"><use href="#i-mx"/><text class="ax" x="0" y="18">-X</text></svg></button><button class="drop" aria-label="Další pohledy"></button>
        <button class="tool" aria-label="Viditelnost"><svg class="icon"><use href="#i-micro"/></svg></button><button class="drop" aria-label="Možnosti viditelnosti"></button>
        <i class="sep"></i>
        <button class="tool" aria-label="Zobrazení modelu"><svg class="icon"><use href="#i-block"/></svg></button><button class="drop" aria-label="Možnosti modelu"></button>
      </div>
      <div class="band band-grow">
        <i class="grip"></i>
        <button class="tool" aria-label="Deformace"><svg class="icon"><use href="#i-frame"/></svg></button>
        <button class="tool" aria-label="Animace"><svg class="icon"><use href="#i-roll"/></svg></button>
        <i class="sep"></i>
        <button class="tool active" aria-label="Výsledky na prutech"><svg class="icon"><use href="#i-idiag"/></svg></button>
        <button class="tool" aria-label="Výsledky na plochách"><svg class="icon"><use href="#i-rsurf"/></svg></button>
        <button class="tool" aria-label="Výsledky na tělesech"><svg class="icon"><use href="#i-rsolid"/></svg></button>
        <button class="tool" aria-label="Reakce"><svg class="icon"><use href="#i-react"/></svg></button>
        <button class="tool" aria-label="Řezy"><svg class="icon"><use href="#i-section"/></svg></button>
        <button class="tool" aria-label="Tabulka výsledků"><svg class="icon"><use href="#i-rtable"/></svg></button>
      </div>
    </div>

    <div class="workspace">
      <aside class="navigator">
        <div class="nav-head">
          <h2>Navigátor projektu - Zobrazit</h2>
          <button aria-label="Připnout"><svg width="12" height="12"><path d="M3.500 1.500h5v5h-5zM7.500 2v5M1 7.500h10M6 8v4" stroke-width="1"/></svg></button>
          <button aria-label="Zavřít panel"><svg width="12" height="12"><path d="M1 1l10 10M11 1 1 11" stroke-width="2"/></svg></button>
        </div>

        <div class="nav-body">
          <div class="tree-wrap">
            <ul class="tree">
              <li>
                <div class="row"><button class="exp open" aria-label="Sbalit"></button><label><input type="checkbox" checked><svg><use href="#t-res"/></svg><b>Výsledky</b></label></div>
                <ul>
                  <li><div class="row"><button class="exp" aria-label="Rozbalit"></button><label><input type="checkbox" checked><svg><use href="#t-res"/></svg><span>Hodnoty</span></label></div></li>
                  <li><div class="row"><label><input type="checkbox" checked><svg><use href="#t-res"/></svg><span>Informace v záhlaví</span></label></div></li>
                  <li><div class="row"><label><input type="checkbox" checked><svg><use href="#t-res"/></svg><span>Max/min - info</span></label></div></li>
                  <li><div class="row"><button class="exp" aria-label="Rozbalit"></button><label><input type="checkbox" class="partial"><svg><use href="#t-res"/></svg><span>Deformace</span></label></div></li>
                  <li>
                    <div class="row"><button class="exp open" aria-label="Sbalit"></button><label><input type="checkbox" class="partial"><svg><use href="#t-res"/></svg><span>Pruty</span></label></div>
                    <ul>
                      <li><div class="row"><label><input type="radio" name="pruty" checked><svg><use href="#t-res"/></svg><span>Dvoubarevně</span></label></div></li>
                      <li><div class="row"><label><input type="radio" name="pruty"><svg><use href="#t-res"/></svg><span>S diagramem</span></label></div></li>
                      <li><div class="row"><label><input type="radio" name="pruty"><svg><use href="#t-res"/></svg><span>Bez diagramu</span></label></div></li>
                      <li><div class="row"><label><input type="radio" name="pruty"><svg><use href="#t-res"/></svg><span>Průřezy</span></label></div></li>
                      <li><div class="row"><label><input type="checkbox"><svg><use href="#t-res"/></svg><span>Vyplnit průběhy výsledků</span></label></div></li>
                      <li><div class="row"><label><input type="checkbox" checked><svg><use href="#t-res"/></svg><span>Šrafování</span></label></div></li>
                      <li><div class="row"><label><input type="checkbox"><svg><use href="#t-res"/></svg><span>Všechny hodnoty</span></label></div></li>
                      <li><div class="row"><label><input type="checkbox"><svg><use href="#t-res"/></svg><span class="selected">Extrémní hodnoty</span></label></div></li>
                      <li><div class="row"><label><input type="checkbox"><svg><use href="#t-res"/></svg><span>Průběhy výsledků mimo stupnici</span></label></div></li>
                      <li><div class="row"><label><input type="checkbox"><svg><use href="#t-res"/></svg><span>Převrátit průběhy V-y a V-z</span></label></div></li>
                      <li><div class="row"><label><input type="checkbox"><svg><use href="#t-res"/></svg><span>Výsledky pro vazby</span></label></div></li>
                      <li><div class="row"><label><input type="checkbox"><svg><use href="#t-res"/></svg><span>Zobrazit v rovině XY</span></label></div></li>
                      <li><div class="row"><button class="exp" aria-label="Rozbalit"></button><label><input type="checkbox" class="partial"><svg><use href="#t-res"/></svg><span>Napětí</span></label></div></li>
                    </ul>
                  </li>
                  <li><div class="row"><button class="exp" aria-label="Rozbalit"></button><label><input type="checkbox" class="partial"><svg><use href="#t-res"/></svg><span>Plochy</span></label></div></li>
                  <li><div class="row"><button class="exp" aria-label="Rozbalit"></button><label><input type="checkbox" class="partial"><svg><use href="#t-res"/></svg><span>Tělesa</span></label></div></li>
                  <li><div class="row"><button class="exp" aria-label="Rozbalit"></button><label><input type="checkbox" class="partial"><svg><use href="#t-res"/></svg><span>Typ zobrazení</span></label></div></li>
                  <li><div class="row"><button class="exp" aria-label="Rozbalit"></button><label><input type="checkbox" checked><svg><use href="#t-res"/></svg><span>Žebra - spolupůsobící na plošném</span></label></div></li>
                  <li><div class="row"><label><input type="checkbox" checked><svg><use href="#t-res"/></svg><span>Výsledkové pruty</span></label></div></li>
                  <li><div class="row"><label><input type="checkbox"><svg><use href="#t-res"/></svg><span>Průběhy v ploše sloupu</span></label></div></li>
                  <li><div class="row"><button class="exp" aria-label="Rozbalit"></button><label><input type="checkbox" class="partial"><svg><use href="#t-res"/></svg><span>Podporové reakce</span></label></div></li>
                  <li><div class="row"><label><input type="checkbox"><svg><use href="#t-res"/></svg><span>Průsvitně</span></label></div></li>
                </ul>
              </li>
              <li>
                <div class="row"><button class="exp open" aria-label="Sbalit"></button><label><input type="checkbox" checked><svg><use href="#t-mesh"/></svg><span>Síť prvků</span></label></div>
                <ul>
                  <li><div class="row"><button class="exp" aria-label="Rozbalit"></button><label><input type="checkbox"><svg><use href="#t-mesh"/></svg><span>Na prutech</span></label></div></li>
                  <li><div class="row"><label><input type="checkbox"><svg><use href="#t-mesh"/></svg><span>Na výsledcích prutu</span></label></div></li>
                  <li><div class="row"><button class="exp" aria-label="Rozbalit"></button><label><input type="checkbox" checked><svg><use href="#t-mesh"/></svg><span>Na plochách</span></label></div></li>
                  <li><div class="row"><label><input type="checkbox"><svg><use href="#t-mesh"/></svg><span>Na výsledcích ploch</span></label></div></li>
                  <li><div class="row"><button class="exp" aria-label="Rozbalit"></button><label><input type="checkbox"><svg><use href="#t-mesh"/></svg><span>V tělese</span></label></div></li>
                  <li><div class="row"><button class="exp" aria-label="Rozbalit"></button><label><input type="checkbox"><svg><use href="#t-mesh"/></svg><span>Kvalita sítě</span></label></div></li>
                </ul>
              </li>
              <li class="more">
                <div class="row"><button class="exp open" aria-label="Sbalit"></button><label><input type="checkbox" class="partial"><svg><use href="#t-cut"/></svg><span>Řezy</span></label></div>
                <ul>
                  <li><div class="row"><label><input type="checkbox" checked><svg><use href="#t-cut"/></svg><span>Označení</span></label></div></li>
                  <li class="more"><div class="row"><label><input type="checkbox" aria-label="Hodnoty v řezu"><svg><use href="#t-cut"/></svg></label></div></li>
                </ul>
              </li>
            </ul>
            <div class="vscroll">
              <button aria-label="Nahoru"><svg width="12" height="8"><path d="M1 7l5-5 5 5"/></svg></button>
              <div class="track"><i class="thumb"></i></div>
              <button aria-label="Dolů"><svg width="12" height="8"><path d="M1 1l5 5 5-5"/></svg></button>
            </div>
          </div>
          <div class="hscroll">
            <button aria-label="Vlevo"><svg width="8" height="12"><path d="M7 1 2 6l5 5"/></svg></button>
            <div class="track"><i class="thumb"></i></div>
            <button aria-label="Vpravo"><svg width="8" height="12"><path d="M1 1l5 5-5 5"/></svg></button>
          </div>
        </div>

        <div class="nav-tabs">
          <button><svg><use href="#t-data"/></svg>Data</button>
          <button class="current"><svg><use href="#t-show"/></svg>Zobrazit</button>
          <button><svg><use href="#t-views"/></svg>Pohledy</button>
          <button><svg><use href="#t-rain"/></svg>Výsledky</button>
        </div>

        <!-- Red callouts over the panel -->
        <svg class="callouts" width="299" height="882" aria-hidden="true">
          <rect x="45" y="313" width="192" height="33"/>
          <rect x="56" y="848" width="84" height="34"/>
          <path d="M51 835V378"/>
          <path class="head" d="M50 358l10 24H40z"/>
        </svg>
      </aside>

      <main class="view">
        <p>Vnitřní síly M-y [kNm]<br>ZS1</p>
        <svg class="model" viewBox="307 170 1080 820" preserveAspectRatio="xMinYMin meet" role="img" aria-label="Průběh momentů M-y na nosnících">
          <defs>
            <linearGradient id="gBeam" x1="0" y1="0" x2="0" y2="1">
              <stop offset="0" stop-color="#4a4a9c"/><stop offset=".13" stop-color="#4a4a9c"/><stop offset=".15" stop-color="#7a7ae2"/><stop offset=".4" stop-color="#8f8ff8"/><stop offset=".8" stop-color="#8c8cf6"/><stop offset=".84" stop-color="#5454ac"/><stop offset=".9" stop-color="#5454ac"/><stop offset=".92" stop-color="#8080e6"/><stop offset="1" stop-color="#8a8af0"/>
            </linearGradient>
            <linearGradient id="gBall"><stop offset="0" stop-color="#3bdc3b"/><stop offset=".6" stop-color="#40ff40"/><stop offset="1" stop-color="#3cf53c"/></linearGradient>
            <clipPath id="cBack"><path d="M490 393l54 53-3 13H434.500l3-13z"/></clipPath>
            <!-- fixed support, drawn at the left end of the first beam -->
            <g id="hinge">
              <path d="M474 389q3-14 15-14 16 2 19 15l-3 18h-35z" fill="#3fdc3f"/>
              <ellipse cx="488" cy="406" rx="18" ry="17" fill="#5cf05c"/>
              <path d="M490 393l54 53-3 13H434.500l3-13z" fill="#42e042"/>
              <ellipse cx="488" cy="406" rx="18" ry="17" fill="#22f022" clip-path="url(#cBack)"/>
              <path d="M437.500 446h10l-13 13zM544 446h-15l12 13z" fill="#40c840"/>
              <path d="M487.500 407l53.500 52H434.500z" fill="#80ff80"/>
            </g>
            <!-- sliding support, drawn at the right end of the first beam -->
            <g id="slide">
              <path d="M916.500 411l-52 46-2.500 12.500h106.500L971 457z" fill="#40de40"/>
              <path d="M864.500 457l-2.500 12.500 14-12.500zM971 457l-2.500 12.500L957 457z" fill="#44c844"/>
              <ellipse cx="916.500" cy="407.500" rx="25" ry="23.500" fill="url(#gBall)"/>
              <path d="M895 396a25 23.500 0 0 0 0 24M938 396a25 23.500 0 0 1 0 24" fill="none" stroke="#44f044" stroke-width="4" stroke-dasharray="2 1"/>
              <path d="M896 429q21 6 41-1l34 29H866z" fill="#84ff84"/>
              <path d="M916.500 411l20 17q-20 8-40 1z" fill="#42fa42"/>
              <path d="M936 428l35 29h-14l-25-28z" fill="#80e880"/>
            </g>
          </defs>

          <path d="M489 371l427 2v21l-412-2-15-9z" fill="url(#gBeam)"/>
          <path d="M427 640.500l855 3v23l-841-3-14-11z" fill="url(#gBeam)"/>

          <use href="#hinge"/>
          <use href="#hinge" x="-62" y="270"/>
          <use href="#slide"/>
          <use href="#slide" x="-104" y="270"/>
          <use href="#slide" x="366" y="272"/>
          <path d="M489 374h20v17h-4l-16-9zM427 644h20v17h-4l-16-9z" fill="#7878e4" opacity=".8"/>

          <g class="ord">
            <path d="M536.500 383v43M583.500 383v75M631.500 383v97M678.500 383v108M726.500 383v108M774.500 383v97M821.500 383v75M869.500 383v44"/>
            <path d="M475.500 652v25M619.500 652v34M668.500 652v14M953.500 654v33M1000.500 654v60M1047.500 654v77M1094.500 654v83M1141.500 654v78M1188.500 654v63M1235.500 654v37"/>
          </g>
          <path class="ord strong" d="M702.500 383v109M523.500 652v39M571.500 652v42"/>
          <path class="ord neg" d="M715.500 636v17M764.500 595v58M812.500 542v111M859.500 601v52"/>

          <path class="curve" d="M489 382.500l427 1M489 382l47 44 48 32.500 48 22 47 10.500 24 1.500 24-1.500 48-10.500 47-22 48-31.500 46-44"/>
          <path class="curve" d="M427 652h264M427 652l48 25 48 14 48 3 48-8 49-19.500 23-14"/>
          <path class="curve neg" d="M691 652.500l220 1M691 652.500l24-16 49-41.500 48-53 47 59 52 52.500"/>
          <path class="curve" d="M911 653.500h371M911 653.500l42 33.500 47 27.500 47 16.500 47 6 47-4.500 47-15.500 47-25.500 47-37"/>

          <g fill="#8c1020"><circle cx="489" cy="382" r="2"/><circle cx="916" cy="383" r="2"/><circle cx="427" cy="652" r="2"/><circle cx="812" cy="653" r="2"/><circle cx="1282" cy="655" r="2"/></g>
          <g fill="#1414d0"><circle cx="702.500" cy="492.500" r="1.500"/><circle cx="571.500" cy="694" r="1.500"/><circle cx="1094.500" cy="737" r="1.500"/></g>
          <circle cx="812" cy="542" r="2" fill="#e01010"/>

          <g class="values">
            <text x="703" y="507">1.08</text>
            <text class="neg" x="812" y="535">-1.10</text>
            <text x="572" y="708">0.41</text>
            <text x="1094" y="751">0.82</text>
          </g>
        </svg>
        <p>Max M-y: 1.08, Min M-y: -1.10 kNm</p>
      </main>
    </div>

    <footer class="statusbar">
      <span class="status-text">Pracovní rovina</span>
      <div class="toggles">
        <button class="on">UCHOP</button>
        <button>RASTR</button>
        <button class="on wide">KARTEZ</button>
        <button class="on">OUCHOP</button>
        <button class="on">VLINIE</button>
        <button class="on">DXF</button>
      </div>
      <div class="coords">
        <span>SS: Globální X</span>
        <span class="plane">Rovina: XY</span>
        <span>X:&nbsp; 1.350 m</span>
        <span>Y:&nbsp; 4.927 m</span>
        <span>Z:&nbsp; 0.000 m</span>
        <svg class="resize" width="12" height="12"><path d="M9 1h2v2H9zM9 5h2v2H9zM5 5h2v2H5zM9 9h2v2H9zM5 9h2v2H5zM1 9h2v2H1z"/></svg>
      </div>
    </footer>
  </div>
</body>
</html>
```
FILE: styles.css
```css
* {
  box-sizing: border-box;
}

body {
  margin: 0;
  font-family: "Noto Sans", "Open Sans", sans-serif;
  font-size: 14px;
  color: #000;
}

button {
  border: 0;
  padding: 0;
  margin: 0;
  background: none;
  font: inherit;
  color: inherit;
}

.sprite {
  position: absolute;
  width: 0;
  height: 0;
}

.window {
  display: flex;
  flex-direction: column;
  height: 100vh;
  border: 1px solid #6b6b6b;
  background: #d0d4dd;
}

.icon {
  width: 20px;
  height: 20px;
  flex: none;
  overflow: visible;
}

/* Title bar */
.titlebar {
  display: flex;
  align-items: center;
  height: 37px;
  padding-left: 8px;
  background: #fff;
}

.app-name {
  margin-left: 6px;
}

.file-name {
  margin-left: 56px;
}

.window-buttons {
  display: flex;
  margin-left: auto;
  padding-right: 2px;
}

.window-buttons button {
  width: 58px;
  height: 36px;
}

.window-buttons path {
  fill: none;
  stroke: #000;
}

/* Menu */
.menubar {
  display: flex;
  align-items: center;
  height: 30px;
  gap: 15px;
  font-size: 13px;
  color: #50555f;
}

.menu-logo {
  width: 20px;
  height: 16px;
  margin: 0 -4px 0 -15px;
}

.menubar u {
  text-underline-offset: 2px;
}

.mdi-buttons {
  display: flex;
  gap: 12px;
  margin-left: auto;
  padding: 4px 9px 0 0;
}

.mdi-buttons path {
  fill: none;
  stroke: #777b82;
}

.grip {
  flex: none;
  width: 10px;
  height: 16px;
  background: repeating-linear-gradient(#fff 0 2px, #a9adb6 2px 3px, transparent 3px 4px) 5px 0 / 2px 100% no-repeat;
}

/* Toolbars */
.toolbars {
  display: flex;
  height: 32px;
  gap: 2px;
}

.band {
  display: flex;
  align-items: center;
  flex: none;
  overflow: hidden;
  border-bottom: 1px solid #b4b9c4;
  border-radius: 3px;
  background: linear-gradient(#eaeef7, #dce0ea 50%, #cfd3dd);
}

.band-main {
  padding-right: 4px;
}

.band-edit,
.band-grow {
  flex: 1 1 0;
}

.band-last {
  width: 40px;
}

.tool {
  display: flex;
  align-items: center;
  justify-content: center;
  flex: none;
  width: 28px;
  height: 28px;
}

.tool.active {
  border: 1px solid #a9987c;
  border-radius: 2px;
  background: linear-gradient(#fbd5a0, #fdb45c 45%, #ffe08a);
}

.drop {
  flex: none;
  width: 15px;
  height: 28px;
}

.drop::before {
  content: "";
  display: block;
  width: 7px;
  height: 4px;
  margin: 0 auto;
  background: #84878e;
  clip-path: polygon(0 0, 100% 0, 50% 100%);
}

.sep {
  flex: none;
  width: 8px;
  height: 18px;
  background: linear-gradient(90deg, #a6abb6 1px, #fff 1px) 3px 0 / 2px 100% no-repeat;
}

.loadcase {
  flex: none;
  width: 216px;
  height: 23px;
  margin: 0 2px 0 3px;
  padding: 0 2px;
  appearance: none;
  border: 1px solid #fff;
  border-radius: 0;
  font: inherit;
  color: #000;
  background:
    url("data:image/svg+xml,%3Csvg xmlns='http://www.w3.org/2000/svg' width='18' height='21'%3E%3Cpath d='M6 8h7l-3.500 4z' fill='%23808080'/%3E%3C/svg%3E") right / 18px 21px no-repeat,
    linear-gradient(#e6eaf3, #d4d8e2) right / 18px 21px no-repeat,
    #fff;
}

.xt {
  font: bold 8px "Liberation Serif", serif;
  fill: #3c3020;
}

.dim {
  fill: #9a9da4;
}

.ax {
  font: 12px "Liberation Serif", serif;
  fill: #333;
}

/* Navigator */
.workspace {
  display: flex;
  flex: 1;
  min-height: 0;
}

.navigator {
  position: relative;
  display: flex;
  flex-direction: column;
  flex: none;
  width: 299px;
}

.nav-head {
  display: flex;
  align-items: center;
  gap: 7px;
  height: 29px;
  padding: 0 5px 2px 4px;
  background: #e9eef8;
}

.nav-head h2 {
  flex: 1;
  margin: 0;
  font-size: 13px;
  font-weight: normal;
  color: #42464e;
}

.nav-head button {
  display: flex;
}

.nav-head path {
  fill: none;
  stroke: #777b84;
}

.nav-body {
  display: flex;
  flex-direction: column;
  flex: 1;
  min-height: 0;
  border: 1px solid #a3a8b3;
  border-width: 1px 1px 2px 0;
  background: #e9eef8;
  padding: 2px 3px 0 3px;
}

.tree-wrap {
  display: flex;
  flex: 1;
  min-height: 0;
}

.tree {
  flex: 1;
  min-width: 0;
  overflow: hidden;
  padding: 1px 0 0 2px;
  background: #fcfbf3;
}

.tree,
.tree ul {
  margin: 0;
  list-style: none;
}

.tree ul {
  padding: 0 0 0 19px;
}

.tree li {
  background: repeating-linear-gradient(#808080 0 1px, transparent 1px 2px) 9px 0 / 1px 100% no-repeat;
}

.tree ul > li:last-child:not(.more) {
  background-size: 1px 12px;
}

.row {
  display: flex;
  align-items: center;
  height: 22px;
  background: repeating-linear-gradient(90deg, #808080 0 1px, transparent 1px 2px) 9px 11px / 12px 1px no-repeat;
}

.exp {
  flex: none;
  width: 11px;
  height: 11px;
  margin: 1px -15px 0 4px;
  border: 1px solid #8c919c;
  border-radius: 1px;
  background:
    linear-gradient(#3454a4, #3454a4) center / 7px 1px no-repeat,
    linear-gradient(#3454a4, #3454a4) center / 1px 7px no-repeat,
    #fff;
}

.exp.open {
  background:
    linear-gradient(#3454a4, #3454a4) center / 7px 1px no-repeat,
    #fff;
}

.row label {
  display: flex;
  align-items: center;
  padding-left: 22px;
  line-height: 20px;
  white-space: nowrap;
}

.row svg {
  flex: none;
  width: 16px;
  height: 16px;
  margin: 0 3px 2px 2px;
}

.row label span,
.row label b {
  padding: 0 2px;
}

.row .selected {
  color: #fff;
  background: #0078d7;
  outline: 1px dotted #d88a3c;
}

.row input {
  display: grid;
  place-items: center;
  flex: none;
  width: 13px;
  height: 13px;
  margin: 0 0 2px;
  appearance: none;
  border: 1px solid #45484d;
  background: linear-gradient(135deg, #fff, #dcdfe8);
}

.row input[type="radio"] {
  border-radius: 50%;
}

.row input[type="checkbox"]:checked::before {
  content: "";
  width: 7px;
  height: 7px;
  background: #000;
  clip-path: polygon(0 35%, 35% 65%, 100% 0, 100% 35%, 38% 100%, 0 70%);
}

.row input.partial::before {
  content: "";
  width: 7px;
  height: 7px;
  background: #999;
}

.row input[type="radio"]:checked::before {
  content: "";
  width: 5px;
  height: 5px;
  border-radius: 50%;
  background: #000;
}

/* Scroll bars */
.vscroll,
.hscroll {
  display: flex;
  flex: none;
  background: #f0f0f0;
}

.vscroll {
  flex-direction: column;
  width: 19px;
}

.hscroll {
  height: 19px;
  margin-right: 19px;
}

.vscroll button,
.hscroll button {
  display: grid;
  place-items: center;
  width: 20px;
  height: 20px;
}

.vscroll path,
.hscroll path {
  fill: none;
  stroke: #505050;
  stroke-width: 2;
}

.track {
  display: flex;
  flex: 1;
}

.vscroll .track {
  align-items: flex-start;
}

.thumb {
  background: #cdcdcd;
}

.vscroll .thumb {
  width: 100%;
  height: 26%;
  margin-top: 268px;
}

.hscroll .thumb {
  width: 71%;
}

/* Navigator tabs */
.nav-tabs {
  display: flex;
  align-items: center;
  gap: 9px;
  height: 30px;
  padding: 0 6px;
  font-size: 13px;
  color: #5c626e;
}

.nav-tabs button {
  display: flex;
  align-items: center;
  gap: 1px;
  white-space: nowrap;
}

.nav-tabs svg {
  flex: none;
  width: 16px;
  height: 16px;
}

.nav-tabs .current {
  height: 25px;
  padding: 0 2px;
  border-radius: 0 0 3px 3px;
  background: linear-gradient(#dfe3ea, #fff);
  box-shadow: 0 0 2px #4fc3d0;
}

.callouts {
  position: absolute;
  top: 0;
  left: 0;
  overflow: visible;
  fill: none;
  stroke: #ee1c24;
  stroke-width: 4;
  pointer-events: none;
}

.callouts .head {
  fill: #ee1c24;
  stroke: none;
}

/* Model view */
.view {
  display: flex;
  flex-direction: column;
  flex: 1;
  min-width: 0;
  margin: 0 1px 2px 5px;
  border: 2px solid #75787d;
  border-width: 2px 0 0 2px;
  background: #fff;
}

.view p {
  flex: none;
  height: 19px;
  margin: 0;
  padding-left: 4px;
  font: 11px/14px "Liberation Sans", Arial, sans-serif;
}

.view p:first-child {
  height: 36px;
  padding-top: 5px;
}

.model {
  flex: 1;
  min-height: 0;
  width: 100%;
}

.curve {
  fill: none;
  stroke: #1414e6;
}

.ord {
  fill: none;
  stroke: #8080f4;
}

.ord.strong {
  stroke: #1414e6;
}

.curve.neg {
  stroke: #f53c46;
}

.ord.neg {
  stroke: #fa8c96;
}

.values {
  font: 9px "Liberation Sans", Arial, sans-serif;
  text-anchor: middle;
  fill: #0000e0;
}

.values .neg {
  fill: #e00000;
}

/* Status bar */
.statusbar {
  display: flex;
  align-items: center;
  height: 27px;
  border-top: 1px solid #9a9ea8;
  font: 13px "Liberation Sans", Arial, sans-serif;
  color: #2c2e33;
  background: linear-gradient(#dfe2e8, #b9bec8 35%, #a5abb5 55%, #b9bdc7);
}

.status-text {
  width: 540px;
  padding-left: 4px;
}

.toggles {
  display: flex;
  gap: 2px;
  height: 24px;
}

.toggles button {
  height: 24px;
  padding: 0 1px 6px;
  border: 1px solid;
  border-color: #fff #888c94 #888c94 #fff;
}

.toggles .on {
  padding: 0 5px 4px 2px;
  border-color: #1c1c1c #f4f4f4 #f4f4f4 #1c1c1c;
}

.toggles .wide {
  padding: 0 5px 4px 6px;
}

.coords {
  display: flex;
  align-items: center;
  margin-left: auto;
}

.coords span {
  padding: 3px 6px 3px 1px;
  border-left: 1px solid #8d929c;
}

.coords span:first-child {
  padding-right: 2px;
  border: 0;
}

.coords .plane {
  padding-right: 20px;
}

.resize {
  align-self: flex-end;
  margin: 0 0 0 12px;
  fill: #74787f;
}
```
